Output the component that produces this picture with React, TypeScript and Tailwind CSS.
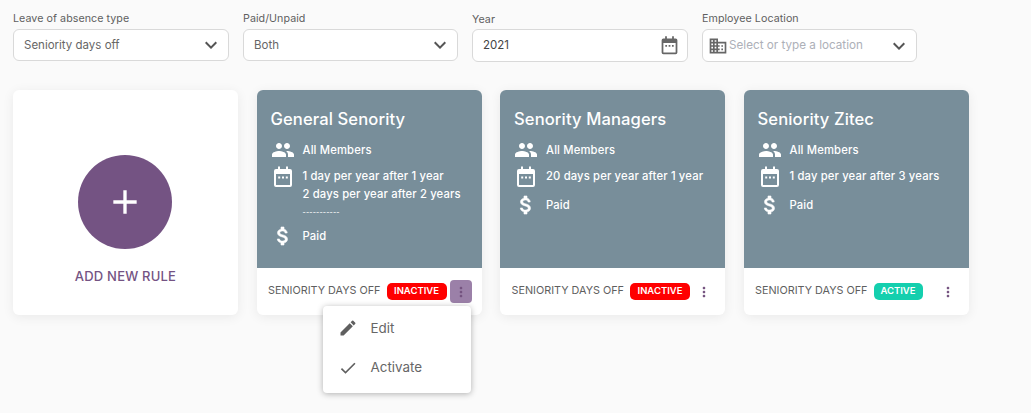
import { MdPeople, MdEdit, MdCheck, MdMoreVert, MdExpandMore, MdAdd, MdOutlineBusiness } from "react-icons/md";

interface Rule {
  title: string;
  lines: string[];
  active: boolean;
  open?: boolean;
}

const rules: Rule[] = [
  { title: "General Senority", lines: ["1 day per year after 1 year", "2 days per year after 2 years", "-----------"], active: false, open: true },
  { title: "Senority Managers", lines: ["20 days per year after 1 year"], active: false },
  { title: "Seniority Zitec", lines: ["1 day per year after 3 years"], active: true },
];

// calendar with a solid header band and three dots
function CalendarIcon({ className }: { className: string }) {
  return (
    <svg viewBox="0 0 24 24" fill="currentColor" className={className}>
      <path
        fillRule="evenodd"
        d="M7 1.5h2V4h6V1.5h2V4h2a2 2 0 0 1 2 2v14a2 2 0 0 1-2 2H5a2 2 0 0 1-2-2V6a2 2 0 0 1 2-2h2zM5 9v11h14V9z"
      />
      <path d="M7.2 11.5h2v2h-2zM11 11.5h2v2h-2zM14.8 11.5h2v2h-2z" />
    </svg>
  );
}

// the dollar in the picture is a bit heavier than the stock one
function DollarIcon({ className }: { className: string }) {
  return (
    <svg viewBox="0 0 24 24" fill="currentColor" stroke="currentColor" strokeWidth={0.6} className={className}>
      <path d="M11.8 10.9c-2.27-.59-3-1.2-3-2.15 0-1.09 1.01-1.85 2.7-1.85 1.78 0 2.44.85 2.5 2.1h2.21c-.07-1.72-1.12-3.3-3.21-3.81V3h-3v2.16c-1.94.42-3.5 1.68-3.5 3.61 0 2.31 1.91 3.46 4.7 4.13 2.5.6 3 1.48 3 2.41 0 .69-.49 1.79-2.7 1.79-2.06 0-2.87-.92-2.98-2.1h-2.2c.12 2.19 1.76 3.42 3.68 3.83V21h3v-2.15c1.95-.37 3.5-1.5 3.5-3.55 0-2.84-2.43-3.81-4.7-4.4z" />
    </svg>
  );
}

function Field({ label, children, w, labelMove }: { label: string; children: React.ReactNode; w: string; labelMove?: boolean }) {
  return (
    <div className={w}>
      <div className={`text-[10.7px] leading-[14px] text-[#5f5f5f] tracking-[0.05px] ${labelMove ? "pt-[1px] mb-[2px]" : "mb-[3px]"}`}>{label}</div>
      {children}
    </div>
  );
}

function RuleCard({ rule }: { rule: Rule }) {
  return (
    <div className="relative w-[225px] h-[225px] rounded-md bg-white shadow-[0_2px_12px_rgba(0,0,0,0.07)] flex flex-col">
      <div className="h-[178px] bg-[#788e9a] rounded-t-md px-[14px] pt-[18px] text-white">
        <div className="text-[16.6px] leading-[22px] font-medium tracking-[0.1px] whitespace-nowrap">{rule.title}</div>
        <div className="flex items-center mt-[10px] h-[20px]">
          <MdPeople className="w-[24px] h-[24px] shrink-0" />
          <span className="ml-[8px] text-[11.25px] font-medium tracking-[0.15px]">All Members</span>
        </div>
        <div className="flex mt-[7px]">
          <CalendarIcon className="w-[24px] h-[24px] shrink-0 -mt-[2px]" />
          <div className="ml-[8px] text-[11.25px] leading-[18px] font-medium tracking-[0.15px] whitespace-nowrap">
            {rule.lines.map((l) =>
              l === "-----------" ? (
                <div key={l} className="h-[17px] leading-[20px] text-[7px]">{l}</div>
              ) : (
                <div key={l}>{l}</div>
              )
            )}
          </div>
        </div>
        <div className="flex items-center mt-[4px] h-[24px]">
          <DollarIcon className="w-[24px] h-[24px] shrink-0" />
          <span className="ml-[8px] text-[11.25px] font-medium tracking-[0.15px]">Paid</span>
        </div>
      </div>
      <div className="flex-1 flex items-center pl-[11px] whitespace-nowrap">
        <span className="text-[10.8px] text-[#5f5f5f] w-[119px] pl-[0.5px]">SENIORITY DAYS OFF</span>
        <span
          className={`h-[17px] rounded-[5px] text-white text-[9.5px] font-semibold flex items-center justify-center ${
            rule.active ? "w-[49px] bg-[#14cfae]" : "w-[60px] bg-[#ff0000]"
          }`}
        >
          {rule.active ? "ACTIVE" : "INACTIVE"}
        </span>
        <span
          className={`flex items-center justify-center w-[22px] h-[23px] rounded-[4px] text-[#74527f] ${
            rule.active ? "ml-[14px]" : "ml-[3px]"
          } ${rule.open ? "bg-[#9b80a8]" : ""}`}
        >
          <MdMoreVert className="w-[16px] h-[16px]" />
        </span>
      </div>
      {rule.open && (
        <div className="absolute left-[66px] top-[216px] z-10 w-[148px] h-[87px] rounded-[4px] bg-white shadow-[0_1px_6px_rgba(0,0,0,0.3)] text-[#666] text-[13.4px]">
          <div className="flex items-center h-[44px] pl-[15px]">
            <MdEdit className="w-[20px] h-[20px] text-[#5f5f5f]" />
            <span className="ml-[13px]">Edit</span>
          </div>
          <div className="flex items-center h-[35px] pl-[15px]">
            <MdCheck className="w-[20px] h-[20px] text-[#5f5f5f]" />
            <span className="ml-[13px]">Activate</span>
          </div>
        </div>
      )}
    </div>
  );
}

export default function App() {
  const box = "flex items-center bg-white border border-[#d9d9d9] rounded-md";
  return (
    <div className="w-[1031px] h-[413px] overflow-hidden bg-[#fafafa] px-[13px] pt-[12px] font-['Inter','Noto_Sans',sans-serif]">
      <div className="flex gap-[14px]">
        <Field label="Leave of absence type" w="w-[216px]">
          <div className={`${box} h-[32px] pl-[10px] pr-[5px] justify-between text-[11.5px] text-[#666]`}>
            <span className="pt-[1px]">Seniority days off</span>
            <MdExpandMore className="w-[24px] h-[24px] text-[#555]" />
          </div>
        </Field>
        <Field label="Paid/Unpaid" w="w-[215px]">
          <div className={`${box} h-[32px] pl-[10px] pr-[5px] justify-between text-[11.5px] text-[#666]`}>
            <span className="pt-[1px]">Both</span>
            <MdExpandMore className="w-[24px] h-[24px] text-[#555]" />
          </div>
        </Field>
        <Field label="Year" w="w-[216px]" labelMove>
          <div className={`${box} h-[33px] pl-[10px] pr-[7px] justify-between text-[11.5px] text-[#444]`}>
            2021
            <CalendarIcon className="w-[21px] h-[21px] text-[#666]" />
          </div>
        </Field>
        <Field label="Employee Location" w="w-[215px]">
          <div className={`${box} h-[33px] pl-[5px] pr-[5px] text-[11.7px] text-[#adb0b8]`}>
            <MdOutlineBusiness className="w-[20px] h-[20px] text-[#666] shrink-0" />
            <span className="ml-[1px] flex-1">Select or type a location</span>
            <MdExpandMore className="w-[24px] h-[24px] text-[#555]" />
          </div>
        </Field>
      </div>
      <div className="flex gap-[18.5px] mt-[28px]">
        <div className="w-[225px] h-[225px] rounded-md bg-white shadow-[0_2px_12px_rgba(0,0,0,0.07)] flex flex-col items-center pt-[65px]">
          <div className="w-[94px] h-[94px] mr-[1px] rounded-full bg-[#745383] flex items-center justify-center">
            <MdAdd className="w-[40px] h-[40px] text-white" />
          </div>
          <div className="mt-[18px] text-[13px] font-medium tracking-[0.2px] text-[#745383]">ADD NEW RULE</div>
        </div>
        {rules.map((r) => (
          <RuleCard key={r.title} rule={r} />
        ))}
      </div>
    </div>
  );
}
